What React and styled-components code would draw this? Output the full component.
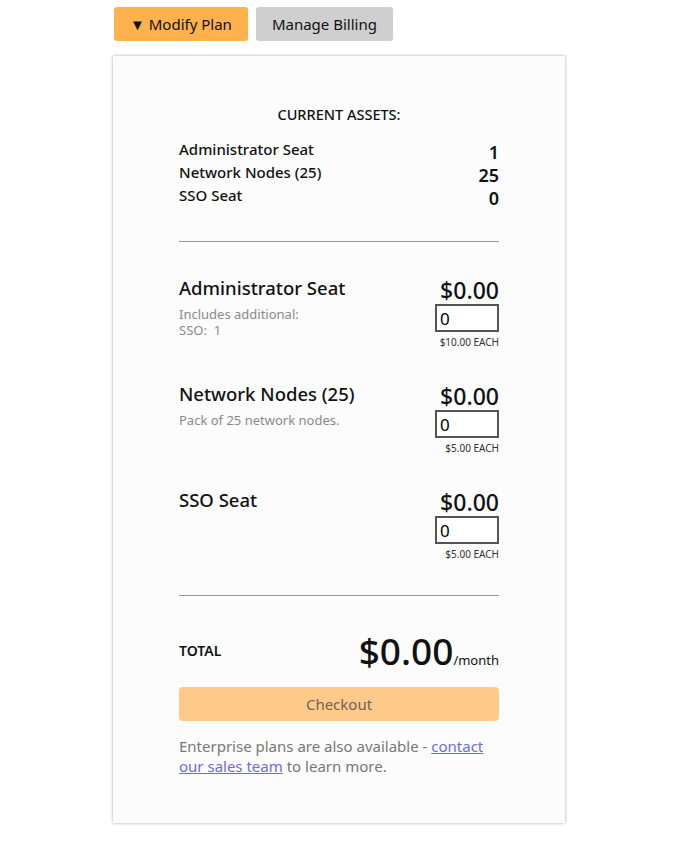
import styled, { createGlobalStyle } from "styled-components";

const Global = createGlobalStyle`
  body {
    margin: 0;
    background: #ffffff;
    font-family: "Noto Sans", "Open Sans", sans-serif;
    color: #111;
  }
`;

const Page = styled.div`
  padding: 7px 0 20px 113px;
`;

const Toolbar = styled.div`
  display: flex;
  gap: 8px;
  margin-left: 1px;
`;

const TopButton = styled.button`
  height: 34px;
  padding: 0 16px;
  border: none;
  border-radius: 3px;
  font-family: inherit;
  font-size: 15px;
  color: #111;
  background: ${(p) => (p.primary ? "#ffb14e" : "#cfcfcf")};
`;

const Card = styled.div`
  width: 452px;
  box-sizing: border-box;
  margin-top: 15px;
  padding: 48px 66px 47px;
  background: #fcfcfc;
  box-shadow: 0 0 3px rgba(0, 0, 0, 0.35);
`;

const AssetsTitle = styled.div`
  text-align: center;
  font-size: 14.5px;
  font-weight: 500;
  margin-bottom: 15px;
`;

const AssetRow = styled.div`
  display: flex;
  justify-content: space-between;
  align-items: flex-end;
  height: 23px;
`;

const AssetName = styled.span`
  font-size: 15px;
  font-weight: 500;
  align-self: flex-start;
`;

const AssetCount = styled.span`
  font-size: 18px;
  font-weight: 600;
  line-height: 20px;
`;

const Divider = styled.hr`
  border: none;
  border-top: 1px solid #999;
  margin: ${(p) => p.margin};
`;

const Item = styled.div`
  display: flex;
  justify-content: space-between;
  height: 106px;
`;

const ItemInfo = styled.div`
  display: flex;
  flex-direction: column;
`;

const ItemName = styled.div`
  font-size: 18.5px;
  font-weight: 500;
  line-height: 24px;
`;

const ItemDesc = styled.div`
  font-size: 13px;
  color: #8a8a8a;
  line-height: 16px;
  margin-top: 6px;
`;

const DescLine = styled.div`
  white-space: pre;
`;

const ItemPrice = styled.div`
  display: flex;
  flex-direction: column;
  align-items: flex-end;
`;

const Price = styled.div`
  font-size: 23px;
  font-weight: 500;
  line-height: 28px;
`;

const QtyInput = styled.input`
  width: 64px;
  height: 28px;
  box-sizing: border-box;
  border: 2px solid #555;
  font-family: inherit;
  font-size: 17px;
  padding: 0 3px;
  background: #fff;
`;

const Each = styled.div`
  font-size: 10px;
  color: #333;
  margin-top: 3px;
`;

const TotalRow = styled.div`
  display: flex;
  justify-content: space-between;
  align-items: center;
`;

const TotalLabel = styled.span`
  font-size: 14px;
  font-weight: 600;
`;

const TotalAmount = styled.span`
  font-size: 37px;
  font-weight: 500;
`;

const PerMonth = styled.span`
  font-size: 13px;
`;

const Checkout = styled.button`
  width: 100%;
  height: 34px;
  margin-top: 11px;
  border: none;
  border-radius: 4px;
  background: #ffc98a;
  color: #6e6458;
  font-family: inherit;
  font-size: 15px;
`;

const Footer = styled.p`
  margin: 15px 0 0;
  font-size: 15px;
  line-height: 20px;
  color: #777;
`;

const Link = styled.a`
  color: #6c6ce0;
`;

const assets = [
  ["Administrator Seat", 1],
  ["Network Nodes (25)", 25],
  ["SSO Seat", 0],
];

const items = [
  { name: "Administrator Seat", desc: ["Includes additional:", "SSO:  1"], each: "$10.00 EACH" },
  { name: "Network Nodes (25)", desc: ["Pack of 25 network nodes."], each: "$5.00 EACH" },
  { name: "SSO Seat", desc: [], each: "$5.00 EACH" },
];

export default function App() {
  return (
    <Page>
      <Global />
      <Toolbar>
        <TopButton primary>▼ Modify Plan</TopButton>
        <TopButton>Manage Billing</TopButton>
      </Toolbar>
      <Card>
        <AssetsTitle>CURRENT ASSETS:</AssetsTitle>
        {assets.map(([n, c]) => (
          <AssetRow key={n}>
            <AssetName>{n}</AssetName>
            <AssetCount>{c}</AssetCount>
          </AssetRow>
        ))}
        <Divider margin="33px 0 34px" />
        {items.map((it) => (
          <Item key={it.name}>
            <ItemInfo>
              <ItemName>{it.name}</ItemName>
              <ItemDesc>
                {it.desc.map((d) => (
                  <DescLine key={d}>{d}</DescLine>
                ))}
              </ItemDesc>
            </ItemInfo>
            <ItemPrice>
              <Price>$0.00</Price>
              <QtyInput defaultValue="0" />
              <Each>{it.each}</Each>
            </ItemPrice>
          </Item>
        ))}
        <Divider margin="1px 0 29px" />
        <TotalRow>
          <TotalLabel>TOTAL</TotalLabel>
          <span>
            <TotalAmount>$0.00</TotalAmount>
            <PerMonth>/month</PerMonth>
          </span>
        </TotalRow>
        <Checkout>Checkout</Checkout>
        <Footer>
          Enterprise plans are also available - <Link href="#">contact our sales team</Link> to learn more.
        </Footer>
      </Card>
    </Page>
  );
}
